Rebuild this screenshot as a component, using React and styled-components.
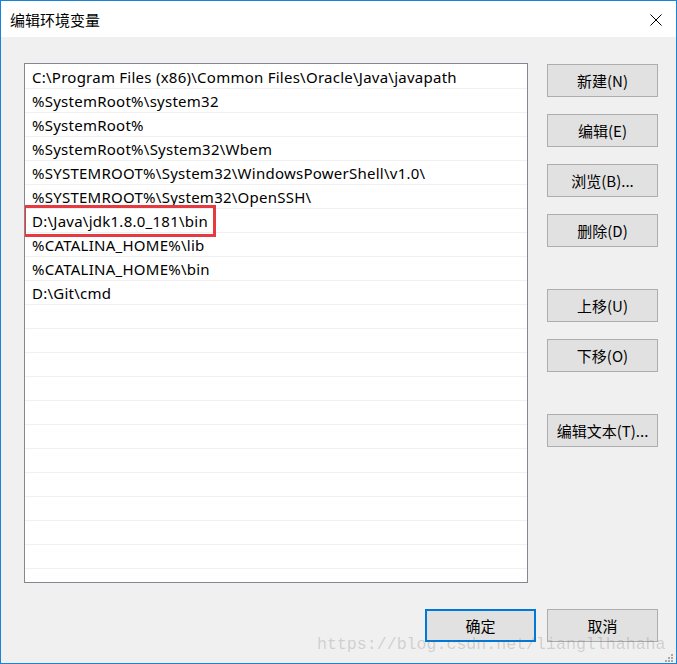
import React from "react";
import styled, { createGlobalStyle } from "styled-components";

const Global = createGlobalStyle`
  html, body { margin: 0; padding: 0; background: #ffffff; }
  body { width: 677px; height: 664px; overflow: hidden; }
  * { box-sizing: border-box; }
`;

const FONT = `"Noto Sans", "Noto Sans CJK SC", sans-serif`;

const Window = styled.div`
  position: relative;
  width: 677px;
  height: 664px;
  border: 1px solid #1883d7;
  display: flex;
  flex-direction: column;
  font-family: ${FONT};
  color: #000;
  overflow: hidden;
`;

const TitleBar = styled.div`
  height: 36px;
  flex: none;
  background: #ffffff;
  display: flex;
  align-items: center;
  justify-content: space-between;
  padding: 0 14px 0 9px;
`;

const Title = styled.div`
  font-family: "Noto Sans CJK SC", sans-serif;
  font-size: 15px;
  line-height: 20px;
  margin-top: 2px;
`;

const CloseIcon = styled.svg`
  width: 12px;
  height: 12px;
  display: block;
  margin-top: 2px;
`;

const Body = styled.div`
  flex: 1;
  background: #f0f0f0;
  padding: 26px 18px 0 23px;
  display: flex;
  flex-direction: column;
`;

const MainRow = styled.div`
  display: flex;
  gap: 19px;
`;

const ListBox = styled.div`
  width: 504px;
  height: 520px;
  background: #ffffff;
  border: 1px solid #828790;
  padding-top: 1px;
  overflow: hidden;
`;

const Row = styled.div`
  position: relative;
  height: 24px;
  border-bottom: 1px solid #f0f0f0;
  padding-left: 7px;
  display: flex;
  align-items: center;
  font-size: 15px;
  letter-spacing: 0.25px;
  white-space: nowrap;
`;

const Highlight = styled.div`
  position: absolute;
  left: -2px;
  top: -4px;
  width: 193px;
  height: 32px;
  border: 3px solid #e53a3f;
  pointer-events: none;
`;

const ButtonColumn = styled.div`
  width: 111px;
  padding-top: 1px;
  display: flex;
  flex-direction: column;
`;

const Button = styled.div`
  width: 111px;
  height: 33px;
  flex: none;
  background: #e1e1e1;
  border: ${(p) => (p.$default ? "2px solid #0078d7" : "1px solid #adadad")};
  display: flex;
  align-items: center;
  justify-content: center;
  font-family: "Noto Sans CJK SC", sans-serif;
  font-size: 15px;
  margin-top: ${(p) => p.$gap ?? 0}px;
`;

const Footer = styled.div`
  display: flex;
  justify-content: flex-end;
  gap: 11px;
  margin-top: 26px;
`;

const Watermark = styled.div`
  position: absolute;
  left: 316px;
  top: 634px;
  font-family: "Liberation Mono", monospace;
  font-size: 16.6px;
  line-height: 20px;
  color: rgba(110, 110, 110, 0.26);
  white-space: nowrap;
  pointer-events: none;
`;

const Grip = styled.svg`
  position: absolute;
  right: 2px;
  bottom: 0;
  width: 12px;
  height: 9px;
`;

const entries = [
  "C:\\Program Files (x86)\\Common Files\\Oracle\\Java\\javapath",
  "%SystemRoot%\\system32",
  "%SystemRoot%",
  "%SystemRoot%\\System32\\Wbem",
  "%SYSTEMROOT%\\System32\\WindowsPowerShell\\v1.0\\",
  "%SYSTEMROOT%\\System32\\OpenSSH\\",
  "D:\\Java\\jdk1.8.0_181\\bin",
  "%CATALINA_HOME%\\lib",
  "%CATALINA_HOME%\\bin",
  "D:\\Git\\cmd",
];

const rows = Array.from({ length: 22 }, (_, i) => entries[i] ?? "");

const sideButtons = [
  { label: "新建(N)", gap: 0 },
  { label: "编辑(E)", gap: 17 },
  { label: "浏览(B)...", gap: 17 },
  { label: "删除(D)", gap: 17 },
  { label: "上移(U)", gap: 42 },
  { label: "下移(O)", gap: 17 },
  { label: "编辑文本(T)...", gap: 42 },
];

export default function App() {
  return (
    <>
      <Global />
      <Window>
        <TitleBar>
          <Title>编辑环境变量</Title>
          <CloseIcon viewBox="0 0 12 12">
            <path d="M0.5 0.5 L11.5 11.5 M11.5 0.5 L0.5 11.5" stroke="#000" strokeWidth="1" fill="none" />
          </CloseIcon>
        </TitleBar>
        <Body>
          <MainRow>
            <ListBox>
              {rows.map((text, i) => (
                <Row key={i}>
                  {text}
                  {i === 6 && <Highlight />}
                </Row>
              ))}
            </ListBox>
            <ButtonColumn>
              {sideButtons.map((b) => (
                <Button key={b.label} $gap={b.gap}>
                  {b.label}
                </Button>
              ))}
            </ButtonColumn>
          </MainRow>
          <Footer>
            <Button $default>确定</Button>
            <Button>取消</Button>
          </Footer>
        </Body>
        <Watermark>https://blog.csdn.net/liangllhahaha</Watermark>
        <Grip viewBox="0 0 12 9">
          <g fill="#a8a8a8">
            <rect x="9" y="0" width="2" height="2" />
            <rect x="6" y="3" width="2" height="2" />
            <rect x="9" y="3" width="2" height="2" />
            <rect x="3" y="6" width="2" height="2" />
            <rect x="6" y="6" width="2" height="2" />
            <rect x="9" y="6" width="2" height="2" />
          </g>
        </Grip>
      </Window>
    </>
  );
}
